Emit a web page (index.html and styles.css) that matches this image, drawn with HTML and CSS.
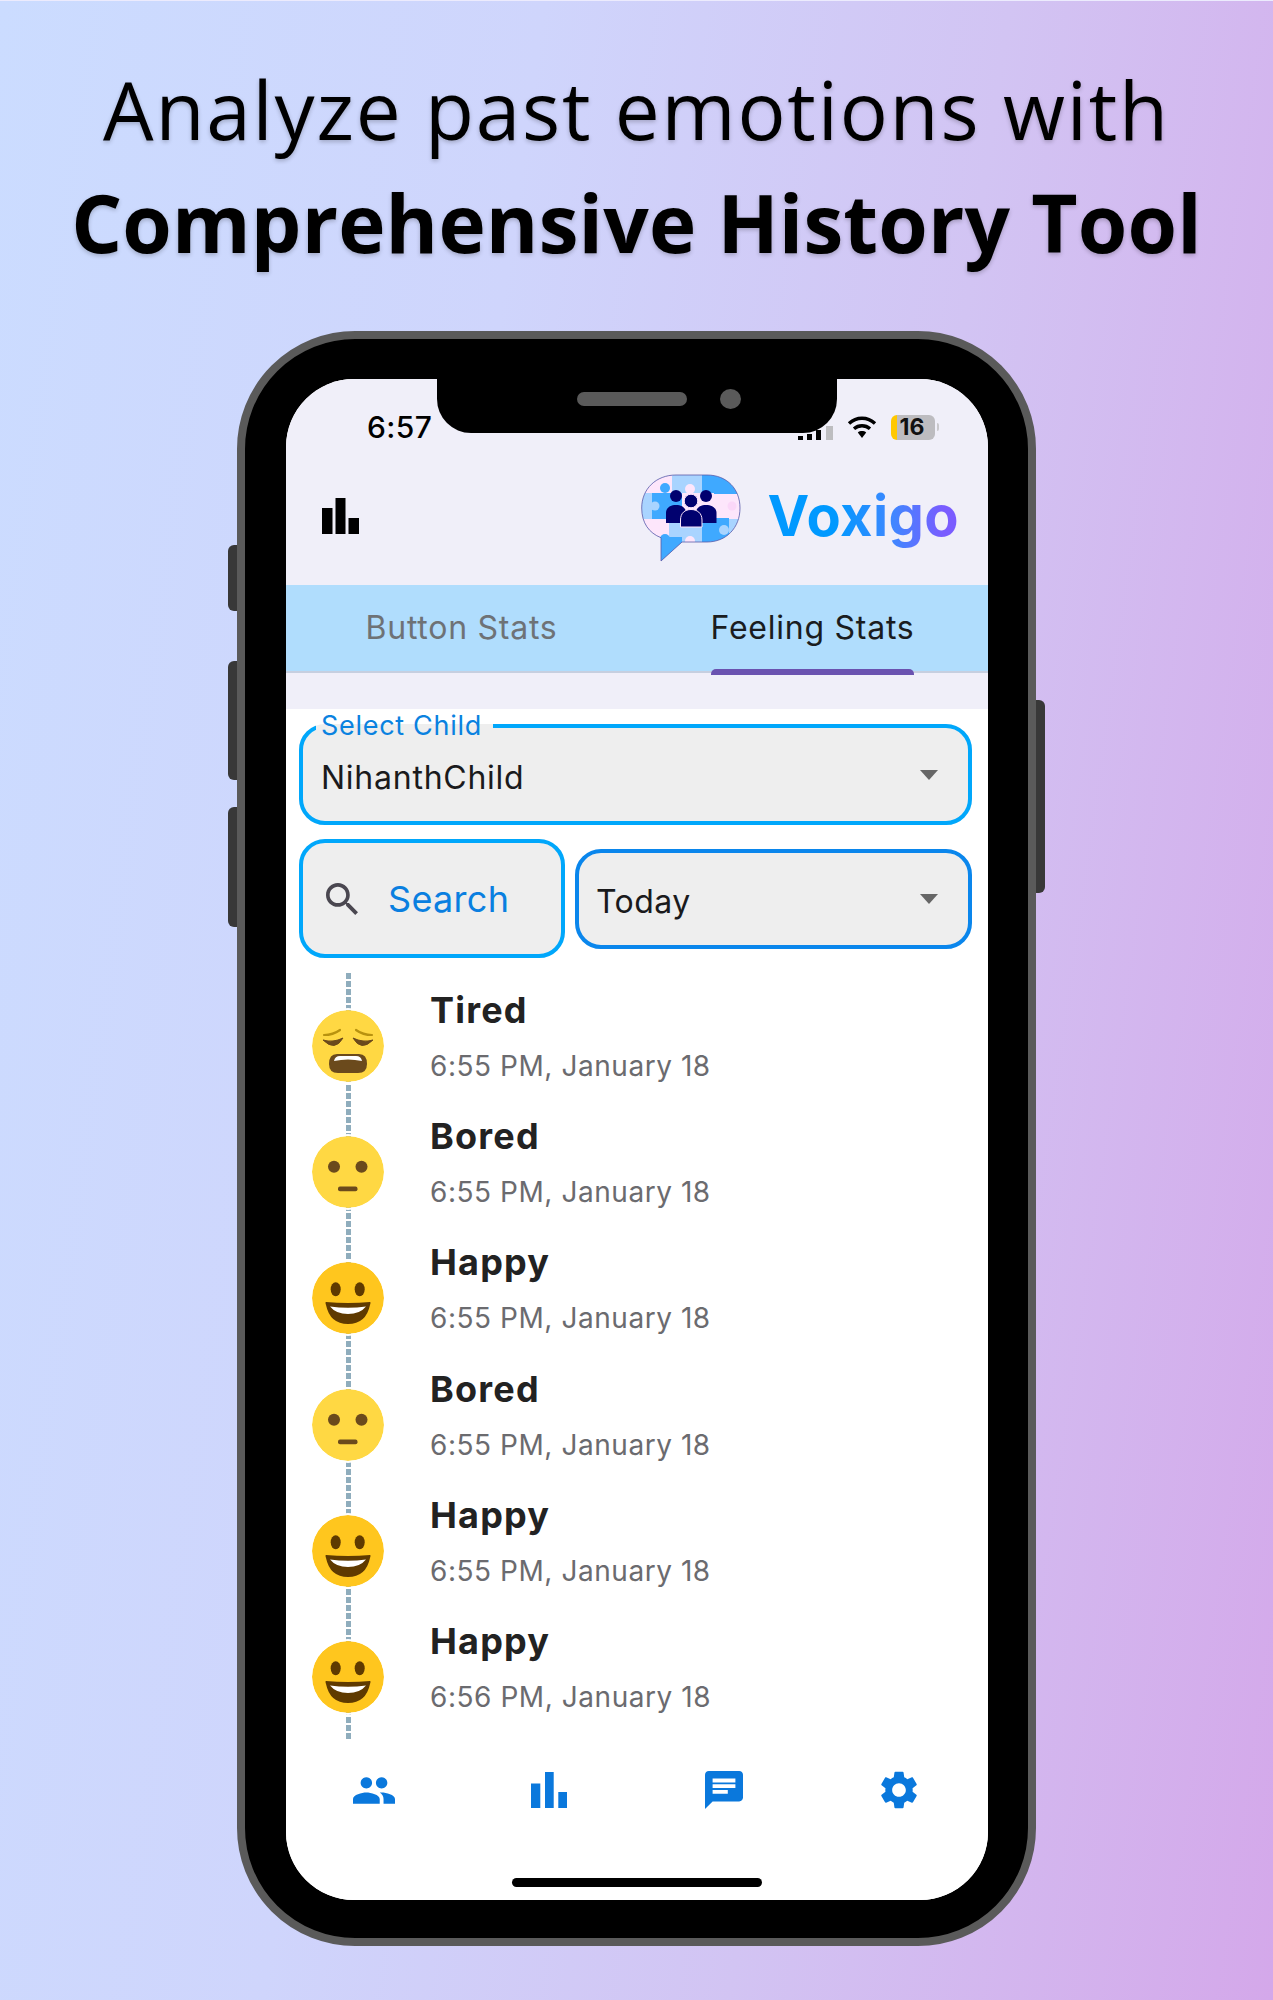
FILE: index.html
```html
<!DOCTYPE html>
<html lang="en">
<head>
<meta charset="utf-8">
<title>Voxigo</title>
<link rel="stylesheet" href="styles.css">
</head>
<body>
<svg class="defs" width="0" height="0" aria-hidden="true">
  <defs>
    <symbol id="tired" viewBox="0 0 72 72">
      <circle cx="36" cy="36" r="36" fill="#ffd843"/>
      <path d="M12 25Q21 25 28 20M60 25Q51 25 44 20" fill="none" stroke="#b8920f" stroke-width="2.200" stroke-linecap="round"/>
      <path d="M11 30Q21 33 31 28Q23 42 11 30ZM61 30Q51 33 41 28Q49 42 61 30Z" fill="#6b4a1c" stroke="#6b4a1c" stroke-width="1"/>
      <path d="M25 44H47Q55 44 55 54Q55 63 46 63H26Q17 63 17 54Q17 44 25 44Z" fill="#6b4a1c"/>
      <path d="M22 51Q23 46 28 46H44Q49 46 50 51Q36 48 22 51Z" fill="#fff"/>
    </symbol>
    <symbol id="bored" viewBox="0 0 72 72">
      <circle cx="36" cy="36" r="36" fill="#ffd843"/>
      <circle cx="22" cy="30.700" r="6" fill="#6b4a1c"/>
      <circle cx="49.500" cy="30.700" r="6" fill="#6b4a1c"/>
      <rect x="26" y="50.500" width="19.500" height="4.800" rx="2" fill="#6b4a1c"/>
    </symbol>
    <symbol id="happy" viewBox="0 0 72 72">
      <circle cx="36" cy="36" r="36" fill="#ffc61e"/>
      <ellipse cx="23.700" cy="27.300" rx="5" ry="7" fill="#5f3a00"/>
      <ellipse cx="47.700" cy="27.300" rx="5" ry="7" fill="#5f3a00"/>
      <path d="M14 40Q36 42 58 40Q59 40 58 43Q54 62 36 62Q18 62 14 43Q13 40 14 40Z" fill="#5f3a00"/>
      <path d="M18 44.500Q36 47 54 44.500Q48 52 36 52Q24 52 18 44.500Z" fill="#fff"/>
    </symbol>
  </defs>
</svg>

<h1 class="headline">
  <span class="headline-light">Analyze past emotions with</span>
  <span class="headline-bold">Comprehensive History Tool</span>
</h1>

<div class="phone">
  <i class="side side-mute"></i>
  <i class="side side-up"></i>
  <i class="side side-down"></i>
  <i class="side side-power"></i>
  <div class="notch"><span class="speaker"></span><span class="camera"></span></div>

  <main class="screen">
    <header class="appbar">
      <div class="status">
        <span class="clock">6:57</span>
        <div class="status-icons">
          <svg class="signal" viewBox="0 0 35 14"><rect x="0" y="10" width="5" height="4" fill="#000"/><rect x="9" y="8" width="5" height="6" fill="#000"/><rect x="18" y="4" width="5" height="10" fill="#000"/><rect x="28" y="0" width="7" height="14" fill="#bdbdc0"/></svg>
          <svg class="wifi" viewBox="0 0 30 22"><path d="M2 7.500C9.500.5 20.500.5 28 7.500M7 12.800C11.500 8.800 18.500 8.800 23 12.800" fill="none" stroke="#000" stroke-width="3.400"/><path d="M10.800 16.500L15 22l4.200-5.500C17 14.600 13 14.600 10.800 16.500z"/></svg>
          <div class="battery"><span class="battery-level">16</span></div>
          <i class="battery-nub"></i>
        </div>
      </div>
      <div class="toolbar">
        <svg class="toolbar-bars" viewBox="0 0 37 36"><path d="M0 10h10.500v26H0zM13.500 0h10v36h-10zM26.500 20H37v16H26.500z"/></svg>
        <div class="brand">
          <svg class="logo" viewBox="2 3 100 88">
            <defs><clipPath id="bubble"><path d="M37 4H68C88 4 101 18 101 37C101 57 87 71 68 71H43L22 90V66.700C10 62 2.700 52 2.700 37C2.700 18 17 4 37 4Z"/></clipPath></defs>
            <g clip-path="url(#bubble)">
              <rect x="0" y="0" width="110" height="95" fill="#a9d4ff"/>
              <rect x="0" y="0" width="33" height="22" fill="#fde6fb"/>
              <rect x="63" y="0" width="40" height="23" fill="#3fa9ff"/>
              <rect x="13" y="22" width="30" height="26" fill="#3fa9ff"/>
              <rect x="43" y="22" width="32" height="26" fill="#fde6fb"/>
              <rect x="75" y="23" width="30" height="25" fill="#fde6fb"/>
              <rect x="0" y="48" width="30" height="25" fill="#fde6fb"/>
              <rect x="30" y="55" width="33" height="20" fill="#a9d4ff"/>
              <rect x="63" y="47" width="27" height="28" fill="#3fa9ff"/>
              <rect x="21" y="66" width="22" height="26" fill="#3fa9ff"/>
              <circle cx="26" cy="17" r="5" fill="#3fa9ff"/>
              <circle cx="51" cy="18" r="5" fill="#fde6fb"/>
              <circle cx="16" cy="35" r="4.500" fill="#a9d4ff"/>
              <circle cx="93" cy="35" r="4.500" fill="#fbd7f8"/>
              <circle cx="35" cy="60" r="5" fill="#a9d4ff"/>
              <circle cx="51" cy="70" r="5" fill="#fde6fb"/>
              <circle cx="85" cy="59" r="5" fill="#a9d4ff"/>
              <circle cx="26" cy="68" r="5" fill="#3fa9ff"/>
            </g>
            <path d="M37 4H68C88 4 101 18 101 37C101 57 87 71 68 71H43L22 90V66.700C10 62 2.700 52 2.700 37C2.700 18 17 4 37 4Z" fill="none" stroke="#5a5aa8" stroke-width=".8"/>
            <g fill="#01016f">
              <circle cx="37" cy="25" r="6"/>
              <circle cx="67" cy="25" r="6"/>
              <path d="M27 52V42C27 37 31 34 37 34C43 34 47 37 47 42V52Z"/>
              <path d="M57 52V42C57 37 61 34 67 34C73 34 77.500 37 77.500 42V52Z"/>
            </g>
            <circle cx="52" cy="30" r="6.800" fill="#01016f" stroke="#fde6fb" stroke-width="1"/>
            <path d="M41.500 56V49C41.500 42 46 38.500 52 38.500C58 38.500 63 42 63 49V56Z" fill="#01016f" stroke="#fde6fb" stroke-width="1"/>
          </svg>
          <span class="brand-name">Voxigo</span>
        </div>
      </div>
    </header>

    <nav class="tabs">
      <div class="tab"><span class="tab-label">Button Stats</span></div>
      <div class="tab tab-active"><span class="tab-label">Feeling Stats</span></div>
    </nav>
    <div class="tab-gap"></div>

    <section class="content">
      <fieldset class="child-select">
        <legend class="child-legend">Select Child</legend>
        <div class="field-row"><span class="field-value">NihanthChild</span><i class="caret"></i></div>
      </fieldset>

      <div class="filters">
        <div class="search">
          <svg class="search-icon" viewBox="3 3 17.500 17.500"><path d="M15.500 14h-.79l-.28-.27C15.410 12.590 16 11.110 16 9.500 16 5.910 13.090 3 9.500 3S3 5.910 3 9.500 5.910 16 9.500 16c1.610 0 3.090-.59 4.230-1.570l.27.280v.79l5 4.990L20.490 19l-4.990-5zm-6 0C7.010 14 5 11.990 5 9.500S7.010 5 9.500 5 14 7.010 14 9.500 11.990 14 9.500 14z"/></svg>
          <span class="search-label">Search</span>
        </div>
        <div class="range"><span class="field-value range-value">Today</span><i class="caret"></i></div>
      </div>

      <ol class="timeline">
        <li class="entry"><svg class="emoji"><use href="#tired"/></svg><div class="entry-text"><span class="entry-title">Tired</span><span class="entry-time">6:55 PM, January 18</span></div></li>
        <li class="entry"><svg class="emoji"><use href="#bored"/></svg><div class="entry-text"><span class="entry-title">Bored</span><span class="entry-time">6:55 PM, January 18</span></div></li>
        <li class="entry"><svg class="emoji"><use href="#happy"/></svg><div class="entry-text"><span class="entry-title">Happy</span><span class="entry-time">6:55 PM, January 18</span></div></li>
        <li class="entry"><svg class="emoji"><use href="#bored"/></svg><div class="entry-text"><span class="entry-title">Bored</span><span class="entry-time">6:55 PM, January 18</span></div></li>
        <li class="entry"><svg class="emoji"><use href="#happy"/></svg><div class="entry-text"><span class="entry-title">Happy</span><span class="entry-time">6:55 PM, January 18</span></div></li>
        <li class="entry"><svg class="emoji"><use href="#happy"/></svg><div class="entry-text"><span class="entry-title">Happy</span><span class="entry-time">6:56 PM, January 18</span></div></li>
      </ol>
    </section>

    <footer class="bottom">
      <div class="bottom-nav">
        <div class="nav-item"><svg class="nav-people" viewBox="1 5 22 14"><path d="M16 11c1.660 0 2.990-1.340 2.990-3S17.660 5 16 5c-1.660 0-3 1.340-3 3s1.340 3 3 3zm-8 0c1.660 0 2.990-1.340 2.990-3S9.660 5 8 5C6.340 5 5 6.340 5 8s1.340 3 3 3zm0 2c-2.330 0-7 1.170-7 3.500V19h14v-2.500c0-2.330-4.670-3.500-7-3.500zm8 0c-.29 0-.62.020-.97.050 1.160.84 1.970 1.970 1.970 3.450V19h6v-2.500c0-2.330-4.670-3.500-7-3.500z"/></svg></div>
        <div class="nav-item"><svg class="nav-bars" viewBox="0 0 36 36"><path d="M0 11.500h9.300V36H0zM14 0h8.700v36H14zM27.300 20H36v16h-8.700z"/></svg></div>
        <div class="nav-item"><svg class="nav-chat" viewBox="2 2 20 20"><path d="M20 2H4c-1.100 0-1.990.9-1.990 2L2 22l4-4h14c1.100 0 2-.9 2-2V4c0-1.100-.9-2-2-2zM6 9h12v2H6V9zm8 5H6v-2h8v2zm4-6H6V6h12v2z"/></svg></div>
        <div class="nav-item"><svg class="nav-gear" viewBox="2.600 2 18.800 20"><path d="M19.140 12.940c.04-.3.060-.61.060-.94 0-.32-.02-.64-.07-.94l2.030-1.580c.18-.14.230-.41.120-.61l-1.920-3.320c-.12-.22-.37-.29-.59-.22l-2.390.96c-.5-.38-1.030-.7-1.620-.94l-.36-2.540c-.04-.24-.24-.41-.48-.41h-3.840c-.24 0-.43.170-.47.41l-.36 2.540c-.59.240-1.130.570-1.620.94l-2.390-.96c-.22-.08-.47 0-.59.220L2.740 8.870c-.12.210-.08.470.12.610l2.030 1.580c-.05.3-.09.630-.09.940s.02.640.07.940l-2.030 1.580c-.18.140-.23.410-.12.610l1.920 3.320c.12.220.37.290.59.220l2.390-.96c.5.380 1.030.7 1.620.94l.36 2.540c.05.240.24.410.48.410h3.840c.24 0 .44-.17.47-.41l.36-2.540c.59-.24 1.130-.56 1.620-.94l2.390.96c.22.080.47 0 .59-.22l1.920-3.320c.12-.22.070-.47-.12-.61l-2.010-1.580zM12 15.600c-1.980 0-3.600-1.620-3.600-3.600s1.620-3.600 3.600-3.600 3.600 1.620 3.600 3.600-1.620 3.600-3.600 3.600z"/></svg></div>
      </div>
      <div class="home-bar"></div>
    </footer>
  </main>
</div>
</body>
</html>
```

FILE: styles.css
```css
* { box-sizing: border-box; }

html, body { margin: 0; padding: 0; }

body {
  width: 1273px;
  height: 2000px;
  overflow: hidden;
  border-top: 1px solid #ecebfd;
  background: linear-gradient(98deg, #cbdcff 0%, #cfd5fc 35%, #d2c4f3 65%, #d4a8ea 100%);
  font-family: Inter, "Noto Sans", sans-serif;
}

.defs { position: absolute; }

.headline {
  margin: 51px 0 53px;
  display: flex;
  flex-direction: column;
  align-items: center;
  font-family: "Open Sans", sans-serif;
  font-size: 80px;
  line-height: 113px;
  color: #000;
  text-shadow: 0 2px 4px rgba(0, 0, 0, .22);
  white-space: nowrap;
}

.headline-light { font-weight: 400; letter-spacing: 1.8px; }
.headline-bold { font-weight: 700; letter-spacing: .2px; }

.phone {
  position: relative;
  width: 799px;
  height: 1615px;
  margin: 0 auto;
  padding: 40px 40px 38px 41px;
  background: #000;
  border: 8px solid #5a5a5a;
  border-radius: 118px;
}

.side {
  position: absolute;
  width: 9px;
  background: #383838;
  border-radius: 6px 0 0 6px;
}

.side-mute { left: -17px; top: 206px; height: 66px; }
.side-up { left: -17px; top: 322px; height: 119px; }
.side-down { left: -17px; top: 468px; height: 120px; }
.side-power { right: -17px; top: 361px; height: 193px; border-radius: 0 6px 6px 0; }

.notch {
  position: absolute;
  z-index: 2;
  left: 192px;
  top: 0;
  width: 400px;
  height: 94px;
  padding: 50px 0 0 44px;
  display: flex;
  justify-content: center;
  align-items: flex-start;
  gap: 33px;
  background: #000;
  border-radius: 0 0 34px 34px;
}

.speaker {
  width: 110px;
  height: 14px;
  margin-top: 3px;
  background: #5a5a5a;
  border-radius: 7px;
}

.camera {
  width: 21px;
  height: 20px;
  background: #5a5a5a;
  border-radius: 50%;
}

.screen {
  display: flex;
  flex-direction: column;
  height: 100%;
  overflow: hidden;
  background: #fff;
  border-radius: 68px;
}

.appbar {
  height: 206px;
  padding-top: 33px;
  background: #f0eff9;
}

.status {
  display: flex;
  justify-content: space-between;
  align-items: center;
  height: 30px;
  padding: 0 49px 0 81px;
}

.clock {
  font-weight: 500;
  font-size: 30px;
  line-height: 30px;
  letter-spacing: .4px;
  color: #000;
}

.status-icons {
  display: flex;
  align-items: center;
}

.signal { width: 35px; height: 14px; margin-right: 14px; margin-top: 11px; }
.wifi { width: 30px; height: 22px; margin-right: 14px; }

.battery {
  width: 44px;
  height: 25px;
  display: flex;
  justify-content: center;
  align-items: center;
  padding-right: 2px;
  border-radius: 6px;
  background: linear-gradient(90deg, #ffc800 0 6px, #bdbcc0 6px);
}

.battery-level {
  font-weight: 700;
  font-size: 23px;
  line-height: 25px;
  color: #111;
}

.battery-nub {
  width: 2px;
  height: 8px;
  margin-left: 2px;
  background: #c9c8cc;
  border-radius: 0 2px 2px 0;
}

.toolbar {
  display: flex;
  justify-content: space-between;
  align-items: center;
  height: 88px;
  margin-top: 32px;
  padding: 0 29px 0 36px;
}

.toolbar-bars {
  width: 37px;
  height: 36px;
  margin-bottom: 4px;
  fill: #000;
}

.brand {
  display: flex;
  align-items: center;
  gap: 27px;
}

.logo { width: 100px; height: 88px; }

.brand-name {
  font-weight: 650;
  font-size: 56px;
  line-height: 64px;
  letter-spacing: .4px;
  margin-bottom: 4px;
  color: transparent;
  background: linear-gradient(90deg, #0099ff 0%, #0099ff 35%, #3f87ff 65%, #7a5cff 92%);
  -webkit-background-clip: text;
  background-clip: text;
}

.tabs {
  display: grid;
  grid-template-columns: 1fr 1fr;
  height: 88px;
  background: #b0ddfd;
  border-bottom: 2px solid #c6cfe0;
}

.tab {
  display: flex;
  justify-content: center;
  padding-top: 24px;
  font-size: 32px;
  line-height: 38px;
  letter-spacing: .75px;
  color: #6e7276;
}

.tab-active { color: #1a1c20; }

.tab-label { position: relative; display: block; height: 64px; }

.tab-active .tab-label::after {
  content: "";
  position: absolute;
  left: 0;
  right: 0;
  bottom: -2px;
  height: 6px;
  background: #6a52b0;
  border-radius: 5px 5px 0 0;
}

.tab-gap { height: 36px; background: #f0eff9; }

.content {
  padding: 4px 16px 0 13px;
}

.child-select {
  margin: 0;
  padding: 0 13px;
  height: 112px;
  background: #eeeeee;
  border: 4px solid #00a7fb;
  border-radius: 26px;
}

.child-legend {
  padding: 0 11px 0 5px;
  font-size: 27px;
  line-height: 26px;
  letter-spacing: .7px;
  color: #0a82e0;
}

.field-row {
  display: flex;
  justify-content: space-between;
  align-items: center;
  height: 64px;
  margin-top: 7px;
  padding: 0 17px 0 5px;
}

.field-value {
  font-size: 32px;
  line-height: 40px;
  letter-spacing: .75px;
  color: #1a1a1c;
}

.range-value { letter-spacing: .45px; }

.caret {
  width: 0;
  height: 0;
  border-left: 9px solid transparent;
  border-right: 9px solid transparent;
  border-top: 10px solid #666;
}

.field-row .caret { margin-top: -6px; }

.filters {
  display: flex;
  align-items: center;
  gap: 10px;
  margin-top: 14px;
}

.search {
  display: flex;
  align-items: center;
  gap: 30px;
  width: 266px;
  height: 119px;
  padding: 0 0 0 23px;
  background: #eee;
  border: 4px solid #00a7fb;
  border-radius: 26px;
}

.search-icon { width: 32px; height: 32px; fill: #4a4750; }

.search-label {
  font-size: 36px;
  line-height: 44px;
  letter-spacing: .3px;
  color: #0a7fe0;
}

.range {
  flex: 1;
  display: flex;
  justify-content: space-between;
  align-items: center;
  height: 100px;
  padding: 7px 30px 0 17px;
  background: #eee;
  border: 4px solid #0a86ec;
  border-radius: 26px;
}

.range .caret { margin-top: -7px; }

.timeline {
  position: relative;
  list-style: none;
  margin: 15px 0 0;
  padding: 10px 0 0;
}

.timeline::before {
  content: "";
  position: absolute;
  left: 47px;
  top: 0;
  bottom: 1px;
  width: 5px;
  background: repeating-linear-gradient(180deg, #8fadbd 0 6.500px, #fff 6.500px 8px);
}

.entry {
  position: relative;
  display: flex;
  align-items: center;
  gap: 46px;
  height: 126.200px;
  padding-left: 13px;
}

.emoji {
  width: 72px;
  height: 72px;
  flex: none;
  border-radius: 50%;
  box-shadow: 0 0 0 2px #fff;
}

.entry-text {
  display: flex;
  flex-direction: column;
  align-self: flex-start;
  padding-top: 5px;
  gap: 16px;
}

.entry-title {
  font-size: 36px;
  line-height: 44px;
  font-weight: 650;
  letter-spacing: 1.2px;
  color: #222;
}

.entry-time {
  font-size: 28px;
  line-height: 36px;
  letter-spacing: .55px;
  color: #6b6b6f;
}

.bottom {
  flex: 1;
  display: flex;
  flex-direction: column;
  justify-content: space-between;
  padding: 30px 0 13px;
  background: #fff;
}

.bottom-nav {
  display: grid;
  grid-template-columns: repeat(4, 1fr);
  padding-right: 2px;
}

.nav-item {
  display: flex;
  justify-content: center;
  align-items: center;
  height: 40px;
  fill: #0a78dc;
}

.nav-people { width: 42px; height: 27px; }
.nav-bars { width: 36px; height: 36px; }
.nav-chat { width: 38px; height: 38px; }
.nav-gear { width: 36px; height: 38px; }

.home-bar {
  width: 250px;
  height: 9px;
  margin: 0 auto;
  background: #000;
  border-radius: 5px;
}
```
